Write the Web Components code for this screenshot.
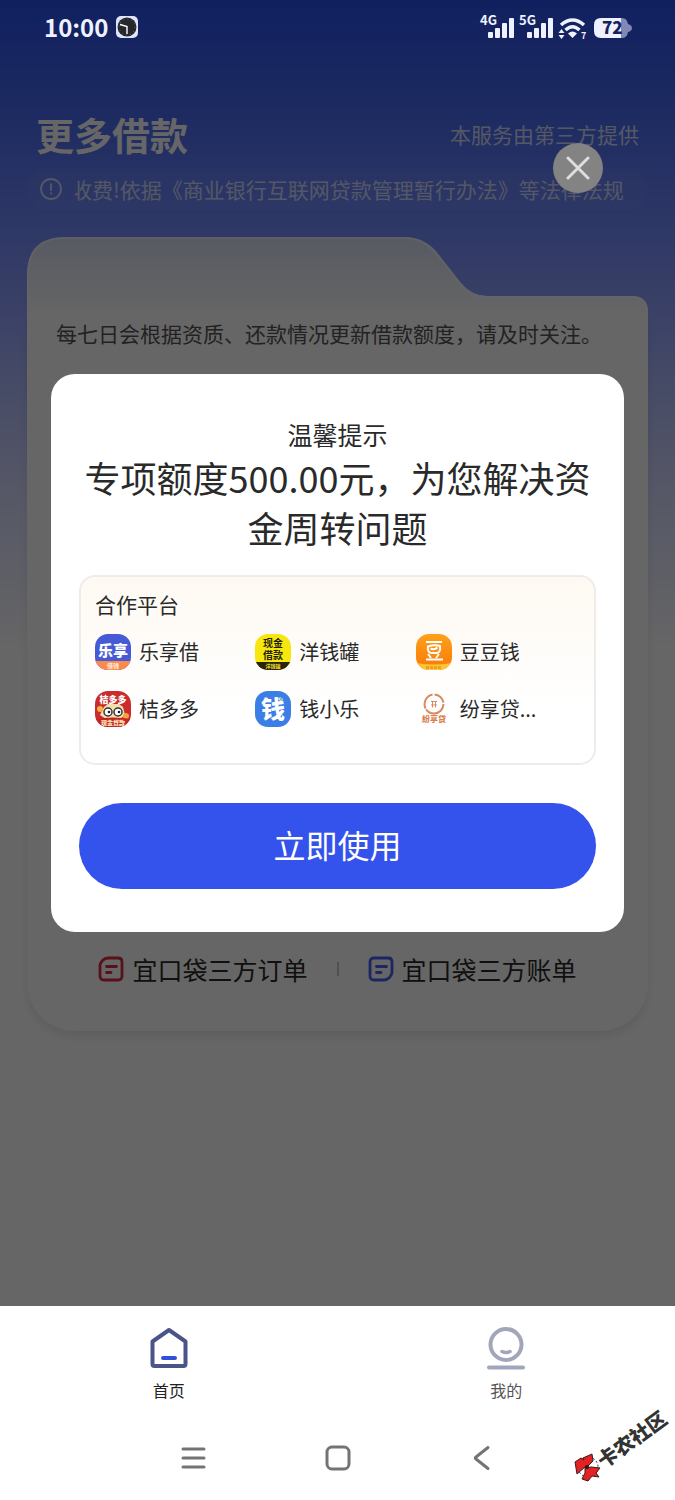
<!DOCTYPE html>
<html lang="zh-CN">
<head>
<meta charset="utf-8">
<meta name="viewport" content="width=device-width, initial-scale=1">
<title>更多借款</title>
<style>
    body {
        margin: 0;
        background-color: #fff;
        color: #2a2a2a;
        font-family: "Noto Sans CJK SC", "Noto Sans", sans-serif;
    }
</style>
</head>
<body>
<loan-app></loan-app>

<script>
class StatusBar extends HTMLElement {
    constructor() {
        super();
        this.attachShadow({ mode: 'open' }).innerHTML = `
            <style>
                :host {
                    display: flex;
                    align-items: center;
                    height: 54px;
                    padding: 0 43px 0 44px;
                    color: #eef1ff;
                }

                svg {
                    display: block;
                    overflow: visible;
                }

                time {
                    font-size: 24px;
                    line-height: 30px;
                    font-weight: 600;
                    margin-right: 8px;
                }

                #indicators {
                    display: flex;
                    gap: 4px;
                    margin-left: auto;
                }

                text {
                    font-family: "Noto Sans CJK SC", sans-serif;
                    font-weight: 700;
                    fill: #eef1ff;
                }
            </style>
            <time>10:00</time>
            <svg width="22" height="22" viewBox="0 0 22 22">
                <rect width="22" height="22" rx="5" fill="#dfe5fb"/>
                <circle cx="11" cy="11" r="9.5" fill="#26272a"/>
                <circle cx="11" cy="11" r="8" fill="none" stroke="#777" stroke-width=".8" stroke-dasharray="1 3.200"/>
                <path d="M11 18v-7.500l-7-2" fill="none" stroke="#fff" stroke-width="1.400"/>
            </svg>
            <div id="indicators">
                ${this.signal('4G')}
                ${this.signal('5G')}
                <svg width="32" height="26" viewBox="0 0 32 26" fill="none" stroke="#eef1ff">
                    <path d="M3 11q11.500-10 23 0M7.500 16q7-6.500 14 0" stroke-width="3.500"/>
                    <path d="M10 19.500q4.500-4 9 0l-4.500 4.500z" fill="#eef1ff" stroke="none"/>
                    <path d="M3.500 15l3 4h-6zM3.500 25l3-4h-6z" fill="#eef1ff" stroke="none"/>
                    <text x="23" y="25" font-size="9" stroke="none">7</text>
                </svg>
                <svg width="38" height="26" viewBox="0 0 38 26">
                    <path d="M26 4h2q5 0 6 6 4 1 4 4t-4 4q-1 6-6 6h-2z" fill="#8288b4"/>
                    <path d="M7 4h20v20h-20q-7 0-7-7v-6q0-7 7-7z" fill="#eef1ff"/>
                    <text x="8" y="20" font-size="17" style="fill:#17225d;font-weight:900">72</text>
                </svg>
            </div>
        `;
    }

    signal(label) {
        return `
            <svg width="35" height="26" viewBox="0 0 35 26" fill="#eef1ff">
                <text x="0" y="11" font-size="13">${label}</text>
                <rect x="8" y="18" width="5" height="6" rx="1"/>
                <rect x="15" y="14" width="5" height="10" rx="1"/>
                <rect x="22" y="9" width="5" height="15" rx="1"/>
                <rect x="29" y="4" width="5" height="20" rx="1"/>
            </svg>
        `;
    }
}

class PageHeader extends HTMLElement {
    constructor() {
        super();
        this.attachShadow({ mode: 'open' }).innerHTML = `
            <style>
                :host {
                    display: flex;
                    justify-content: space-between;
                    align-items: center;
                    padding: 0 36px;
                    margin-top: 57px;
                    color: #fff;
                }

                h1 {
                    margin: 0;
                    font-size: 38px;
                    line-height: 46px;
                    font-weight: 700;
                }

                span {
                    font-size: 21px;
                    line-height: 32px;
                    color: rgba(255, 255, 255, 0.75);
                }
            </style>
            <h1><slot></slot></h1>
            <span><slot name="note"></slot></span>
        `;
    }
}

class NoticeBar extends HTMLElement {
    constructor() {
        super();
        this.attachShadow({ mode: 'open' }).innerHTML = `
            <style>
                :host {
                    display: flex;
                    align-items: center;
                    gap: 12px;
                    height: 42px;
                    margin: 11px 27px 0;
                    padding: 0 12px;
                    border-radius: 21px;
                    background-color: rgba(255, 255, 255, 0.04);
                    color: rgba(255, 255, 255, 0.7);
                }

                svg {
                    flex: none;
                }

                #track {
                    flex: 1;
                    min-width: 0;
                    overflow: hidden;
                    white-space: nowrap;
                    text-indent: -4px;
                    font-size: 21px;
                    line-height: 32px;
                }
            </style>
            <svg width="24" height="24" viewBox="0 0 24 24" fill="none" stroke="currentColor" stroke-width="1.800">
                <circle cx="12" cy="12" r="10"/>
                <path d="M12 6.500v7.500M12 15.500v2"/>
            </svg>
            <div id="track"><slot></slot></div>
        `;
    }
}

class FolderCard extends HTMLElement {
    constructor() {
        super();
        this.attachShadow({ mode: 'open' }).innerHTML = `
            <style>
                :host {
                    display: block;
                    margin: 27px 27px 0;
                }

                #tab {
                    display: block;
                    width: 100%;
                    height: 80px;
                }

                #body {
                    padding-bottom: 44px;
                    border-radius: 0 0 48px 48px;
                    background-color: #fff;
                    box-shadow: 0 6px 8px rgba(0, 0, 0, 0.08);
                }

                p {
                    margin: 0;
                    padding: 0 29px;
                    color: #555;
                    font-size: 21px;
                    line-height: 32px;
                    white-space: nowrap;
                }

                #panel {
                    min-height: 562px;
                    margin: 20px 24px 20px;
                    border-radius: 24px;
                    background-color: #fff;
                }

                #links {
                    display: flex;
                    justify-content: center;
                    align-items: center;
                    gap: 29px;
                }

                #divider {
                    width: 2px;
                    height: 14px;
                    background-color: #c8c8c8;
                }
            </style>
            <svg id="tab" viewBox="0 0 621 80" preserveAspectRatio="none">
                <defs>
                    <linearGradient id="fade" x1="0" y1="0" x2="0" y2="1">
                        <stop offset="0" stop-color="#dbe1f8"/>
                        <stop offset="1" stop-color="#fff"/>
                    </linearGradient>
                </defs>
                <path d="M0 80V38Q0 0 38 0H378Q396 0 409 14L434 46Q445 59 460 59H605Q621 59 621 75V80z" fill="url(#fade)"/>
                <path d="M1 80V38Q1 1 38 1H378Q395 1 408 15L433 47Q444 60 460 60H605Q620 60 620 75V80" fill="none" stroke="#fff" stroke-opacity=".5" stroke-width="2"/>
            </svg>
            <div id="body">
                <p><slot></slot></p>
                <div id="panel"></div>
                <div id="links">
                    <slot name="orders"></slot>
                    <span id="divider"></span>
                    <slot name="bills"></slot>
                </div>
            </div>
        `;
    }
}

class RecordLink extends HTMLElement {
    constructor() {
        super();
        // the cut corner is top left for orders, bottom right for bills
        const icons = {
            orders: '<path d="M10 2h10q4 0 4 4v14q0 4-4 4h-14q-4 0-4-4v-10q0-3 2.500-5.500t5.500-2.500z"/>',
            bills: '<path d="M6 2h14q4 0 4 4v10q0 3-2.500 5.500t-5.500 2.500h-10q-4 0-4-4v-14q0-4 4-4z"/>'
        };
        const kind = this.getAttribute('kind');
        this.attachShadow({ mode: 'open' }).innerHTML = `
            <style>
                :host {
                    display: block;
                    --icon-color: #d92b45;
                }

                :host([kind="bills"]) {
                    --icon-color: #4a5ff0;
                }

                a {
                    display: flex;
                    align-items: center;
                    gap: 8px;
                    color: #2a2a2a;
                    font-size: 25px;
                    line-height: 36px;
                    text-decoration: none;
                    white-space: nowrap;
                }

                svg {
                    fill: none;
                    stroke: var(--icon-color);
                    stroke-width: 2.8;
                    stroke-linecap: round;
                }
            </style>
            <a href="#${kind}">
                <svg width="26" height="26" viewBox="0 0 26 26">
                    ${icons[kind]}
                    <path d="M8.500 10.500h10M8.500 16.500h4.500"/>
                </svg>
                <slot></slot>
            </a>
        `;
    }
}

class PlatformItem extends HTMLElement {
    constructor() {
        super();
        this.attachShadow({ mode: 'open' }).innerHTML = `
            <style>
                :host {
                    display: flex;
                    align-items: center;
                    gap: 8px;
                    min-width: 0;
                    font-size: 20px;
                    line-height: 36px;
                    white-space: nowrap;
                }

                svg {
                    flex: none;
                    border-radius: 13px;
                }

                text {
                    font-family: "Noto Sans CJK SC", sans-serif;
                    font-weight: 900;
                    text-anchor: middle;
                    fill: #fff;
                }
            </style>
            <svg width="36" height="36" viewBox="0 0 36 36">${this.logo(this.getAttribute('logo'))}</svg>
            <slot></slot>
        `;
    }

    logo(name) {
        switch (name) {
            case 'lexiang':
                return `
                    <rect width="36" height="36" fill="#465ad6"/>
                    <text x="18" y="22" font-size="15">乐享</text>
                    <path d="M0 27h36v9h-36z" fill="#fb8b4b"/>
                    <text x="18" y="34" font-size="6" style="fill:#ffe3cf">借钱</text>`;
            case 'yangqian':
                return `
                    <rect width="36" height="36" fill="#f8e70f"/>
                    <text x="18" y="13" font-size="10" style="fill:#211e08;font-weight:700">现金</text>
                    <text x="18" y="25" font-size="10" style="fill:#211e08;font-weight:700">借款</text>
                    <path d="M0 28h36v8h-36z" fill="#29240c"/>
                    <text x="18" y="34" font-size="5" style="fill:#d8c62c">洋钱罐</text>`;
            case 'doudou':
                return `
                    <defs>
                        <linearGradient id="orange" x1="0" y1="0" x2="0" y2="1">
                            <stop offset="0" stop-color="#fda11a"/>
                            <stop offset="1" stop-color="#f97908"/>
                        </linearGradient>
                    </defs>
                    <rect width="36" height="36" fill="url(#orange)"/>
                    <g fill="none" stroke="#fff" stroke-width="2">
                        <path d="M10 8h16M10 25.500h17"/>
                        <path d="M12 12.500q6-2 12-.5 1 6-3 7h-6q-4-1-3-6.500z"/>
                        <path d="M14.500 14.500q4 2 7-1M12 20l3 4M23 20l-3 4"/>
                    </g>
                    <path d="M0 29q18 3 36 0v7h-36z" fill="#fcc535"/>
                    <path d="M10 33.500h16" stroke="#e79a1d" stroke-width="2.500" stroke-dasharray="3 1"/>`;
            case 'jieduoduo':
                return `
                    <rect width="36" height="36" fill="#cb2b2d"/>
                    <path d="M9 16l4-3h11l4 3 2 8-5 4h-14l-6-4z" fill="#f3dfb0"/>
                    <circle cx="5" cy="18" r="3" fill="#f7b443"/>
                    <circle cx="31" cy="25" r="3" fill="#f7a33c"/>
                    <circle cx="13" cy="21" r="4" fill="#fff" stroke="#333" stroke-width="1.500"/>
                    <circle cx="23" cy="21" r="4" fill="#fff" stroke="#333" stroke-width="1.500"/>
                    <circle cx="14" cy="21" r="1.300" fill="#222"/>
                    <circle cx="24" cy="21" r="1.300" fill="#222"/>
                    <path d="M0 28q18-3 36 0v8h-36z" fill="#c32525"/>
                    <text x="18" y="12" font-size="9">桔多多</text>
                    <text x="18" y="34" font-size="6" style="fill:#ffe1b8">现金贷款</text>`;
            case 'qianxiaole':
                return `
                    <rect width="36" height="36" fill="#3b7fe6"/>
                    <text x="18" y="27" font-size="24">钱</text>
                    <circle cx="26" cy="8" r="1.500" fill="#6ec3b2"/>`;
            case 'fenxiang':
                return `
                    <g fill="none" stroke="#d98a60">
                        <circle cx="18" cy="13" r="9.5" stroke-width="2" stroke-dasharray="24 1 18 2 13 2"/>
                        <path d="M15 10.500h6M15 14h6M16.500 10.500v6M19.500 10.500v6" stroke-width="1"/>
                    </g>
                    <text x="18" y="31" font-size="8" style="fill:#dc7f50">纷享贷</text>`;
        }
        return '';
    }
}

class LoanDialog extends HTMLElement {
    constructor() {
        super();
        this.attachShadow({ mode: 'open' }).innerHTML = `
            <style>
                :host {
                    position: absolute;
                    inset: 0;
                    box-sizing: border-box;
                    display: flex;
                    flex-direction: column;
                    padding: 143px 51px 0;
                    background-color: rgba(0, 0, 0, 0.6);
                }

                #close {
                    align-self: flex-end;
                    flex: none;
                    width: 50px;
                    height: 50px;
                    margin-right: 21px;
                    padding: 0;
                    border: 0;
                    border-radius: 50%;
                    background-color: #838383;
                    cursor: pointer;
                }

                #close svg {
                    display: block;
                    margin: auto;
                }

                #dialog {
                    margin-top: 181px;
                    padding: 42px 28px 43px;
                    border-radius: 24px;
                    background-color: #fff;
                    text-align: center;
                }

                #tip {
                    margin: 0;
                    font-size: 25px;
                    line-height: 36px;
                }

                h2 {
                    margin: 0;
                    font-size: 36px;
                    line-height: 50px;
                    font-weight: 400;
                }

                section {
                    margin: 23px 0 38px;
                    padding: 11px 18px 36px 14px;
                    border: 2px solid #efebe8;
                    border-radius: 16px;
                    background: linear-gradient(#fef9f2, #fff 70%);
                    text-align: left;
                }

                h3 {
                    margin: 0 0 14px;
                    font-size: 21px;
                    line-height: 32px;
                    font-weight: 400;
                }

                #platforms {
                    display: grid;
                    grid-template-columns: repeat(3, 1fr);
                    row-gap: 21px;
                }

                #use {
                    display: block;
                    width: 100%;
                    height: 86px;
                    padding: 0 0 4px;
                    border: 0;
                    border-radius: 43px;
                    background-color: #3452ec;
                    color: #fff;
                    font-family: inherit;
                    font-size: 32px;
                    cursor: pointer;
                }
            </style>
            <button id="close" type="button" aria-label="关闭">
                <svg width="24" height="24" viewBox="0 0 24 24" stroke="#dedede" stroke-width="3" stroke-linecap="round">
                    <path d="M2 2l20 20M22 2l-20 20"/>
                </svg>
            </button>
            <div id="dialog" role="dialog" aria-labelledby="title">
                <p id="tip"><slot name="tip"></slot></p>
                <h2 id="title"><slot name="title"></slot></h2>
                <section>
                    <h3>合作平台</h3>
                    <div id="platforms"><slot></slot></div>
                </section>
                <button id="use" type="button">立即使用</button>
            </div>
        `;
    }

    connectedCallback() {
        const close = () => this.remove();
        this.shadowRoot.getElementById('close').addEventListener('click', close);
        this.shadowRoot.getElementById('use').addEventListener('click', close);
    }
}

class TabBar extends HTMLElement {
    constructor() {
        super();
        this.attachShadow({ mode: 'open' }).innerHTML = `
            <style>
                :host {
                    display: grid;
                    grid-template-columns: 1fr 1fr;
                    padding: 20px 0 14px;
                    background-color: #fff;
                }

                a {
                    display: flex;
                    flex-direction: column;
                    align-items: center;
                    gap: 8px;
                    color: #555;
                    font-size: 16px;
                    line-height: 24px;
                    text-decoration: none;
                }

                a[aria-current] {
                    color: #222;
                }

                svg {
                    fill: none;
                    stroke-linecap: round;
                    stroke-linejoin: round;
                }
            </style>
            <a href="#home" aria-current="page">
                <svg width="44" height="44" viewBox="0 0 44 44" stroke-width="4">
                    <path d="M22 4L38.500 15.500V38q0 2-2 2H7.500q-2 0-2-2V15.500z" stroke="#4b5488"/>
                    <path d="M16 32h12" stroke="#3350dd"/>
                </svg>
                首页
            </a>
            <a href="#mine">
                <svg width="44" height="44" viewBox="0 0 44 44" stroke="#a2a6bb" stroke-width="4">
                    <circle cx="22" cy="18.500" r="15.500"/>
                    <path d="M18 25.500q4 2 8 0" stroke-width="3.500"/>
                    <path d="M5 41.500h34"/>
                </svg>
                我的
            </a>
        `;
    }
}

class SystemNav extends HTMLElement {
    constructor() {
        super();
        this.attachShadow({ mode: 'open' }).innerHTML = `
            <style>
                :host {
                    position: relative;
                    display: flex;
                    justify-content: center;
                    height: 84px;
                    background-color: #fff;
                }

                button {
                    display: flex;
                    justify-content: center;
                    align-items: center;
                    width: 144px;
                    padding: 0;
                    border: 0;
                    background: none;
                }

                button svg {
                    fill: none;
                    stroke: #747474;
                    stroke-width: 3;
                    stroke-linecap: round;
                    stroke-linejoin: round;
                }

                #watermark {
                    position: absolute;
                    right: 0;
                    bottom: 8px;
                    overflow: visible;
                }

                #watermark text {
                    font-family: "Noto Sans CJK SC", sans-serif;
                    font-size: 20px;
                    font-weight: 900;
                    fill: #333;
                }
            </style>
            <button type="button" aria-label="菜单">
                <svg width="26" height="26" viewBox="0 0 26 26"><path d="M2 4h21M2 13h21M2 22h21"/></svg>
            </button>
            <button type="button" aria-label="主屏幕">
                <svg width="26" height="26" viewBox="0 0 26 26"><rect x="2" y="2" width="22" height="22" rx="5"/></svg>
            </button>
            <button type="button" aria-label="返回">
                <svg width="26" height="26" viewBox="0 0 26 26"><path d="M19 2.500L7 12q-1.500 1 0 2L19 23.500"/></svg>
            </button>
            <svg id="watermark" width="105" height="90" viewBox="0 0 105 90">
                <circle cx="18" cy="65" r="10" fill="#fff" stroke="#333" stroke-dasharray="2 2"/>
                <path d="M5 60l6-4 3 2-1-2 9-4 1 7-5 5-3 1-8 7z" fill="#e32224" stroke="#3a1c1c"/>
                <path d="M15 66l6-1 9 1-4 5 3 4-7-1-4 5-6-2 3-6z" fill="#e32224" stroke="#3a1c1c"/>
                <circle cx="17" cy="65" r="2" fill="#2b1717"/>
                <text transform="translate(34 67) rotate(-36)">卡农社区</text>
            </svg>
        `;
    }
}

class LoanApp extends HTMLElement {
    constructor() {
        super();
        this.attachShadow({ mode: 'open' }).innerHTML = `
            <style>
                :host {
                    display: flex;
                    flex-direction: column;
                    min-height: 100vh;
                }

                main {
                    position: relative;
                    flex: 1;
                    background: linear-gradient(#2a50ee 0, #4668f2 100px, #718aff 220px, #96a6ff 320px, #cfd5ff 470px, #fff 650px);
                }

                /* the system clock stays bright over the dialog's shade */
                status-bar {
                    position: relative;
                    z-index: 1;
                }
            </style>
            <main>
                <status-bar></status-bar>
                <page-header>更多借款<span slot="note">本服务由第三方提供</span></page-header>
                <notice-bar>收费!依据《商业银行互联网贷款管理暂行办法》等法律法规</notice-bar>
                <folder-card>
                    每七日会根据资质、还款情况更新借款额度，请及时关注。
                    <record-link slot="orders" kind="orders">宜口袋三方订单</record-link>
                    <record-link slot="bills" kind="bills">宜口袋三方账单</record-link>
                </folder-card>
                <loan-dialog>
                    <span slot="tip">温馨提示</span>
                    <span slot="title">专项额度500.00元，为您解决资金周转问题</span>
                    <platform-item logo="lexiang">乐享借</platform-item>
                    <platform-item logo="yangqian">洋钱罐</platform-item>
                    <platform-item logo="doudou">豆豆钱</platform-item>
                    <platform-item logo="jieduoduo">桔多多</platform-item>
                    <platform-item logo="qianxiaole">钱小乐</platform-item>
                    <platform-item logo="fenxiang">纷享贷...</platform-item>
                </loan-dialog>
            </main>
            <tab-bar></tab-bar>
            <system-nav></system-nav>
        `;
    }
}

customElements.define('status-bar', StatusBar);
customElements.define('page-header', PageHeader);
customElements.define('notice-bar', NoticeBar);
customElements.define('folder-card', FolderCard);
customElements.define('record-link', RecordLink);
customElements.define('platform-item', PlatformItem);
customElements.define('loan-dialog', LoanDialog);
customElements.define('tab-bar', TabBar);
customElements.define('system-nav', SystemNav);
customElements.define('loan-app', LoanApp);
</script>
</body>
</html>
